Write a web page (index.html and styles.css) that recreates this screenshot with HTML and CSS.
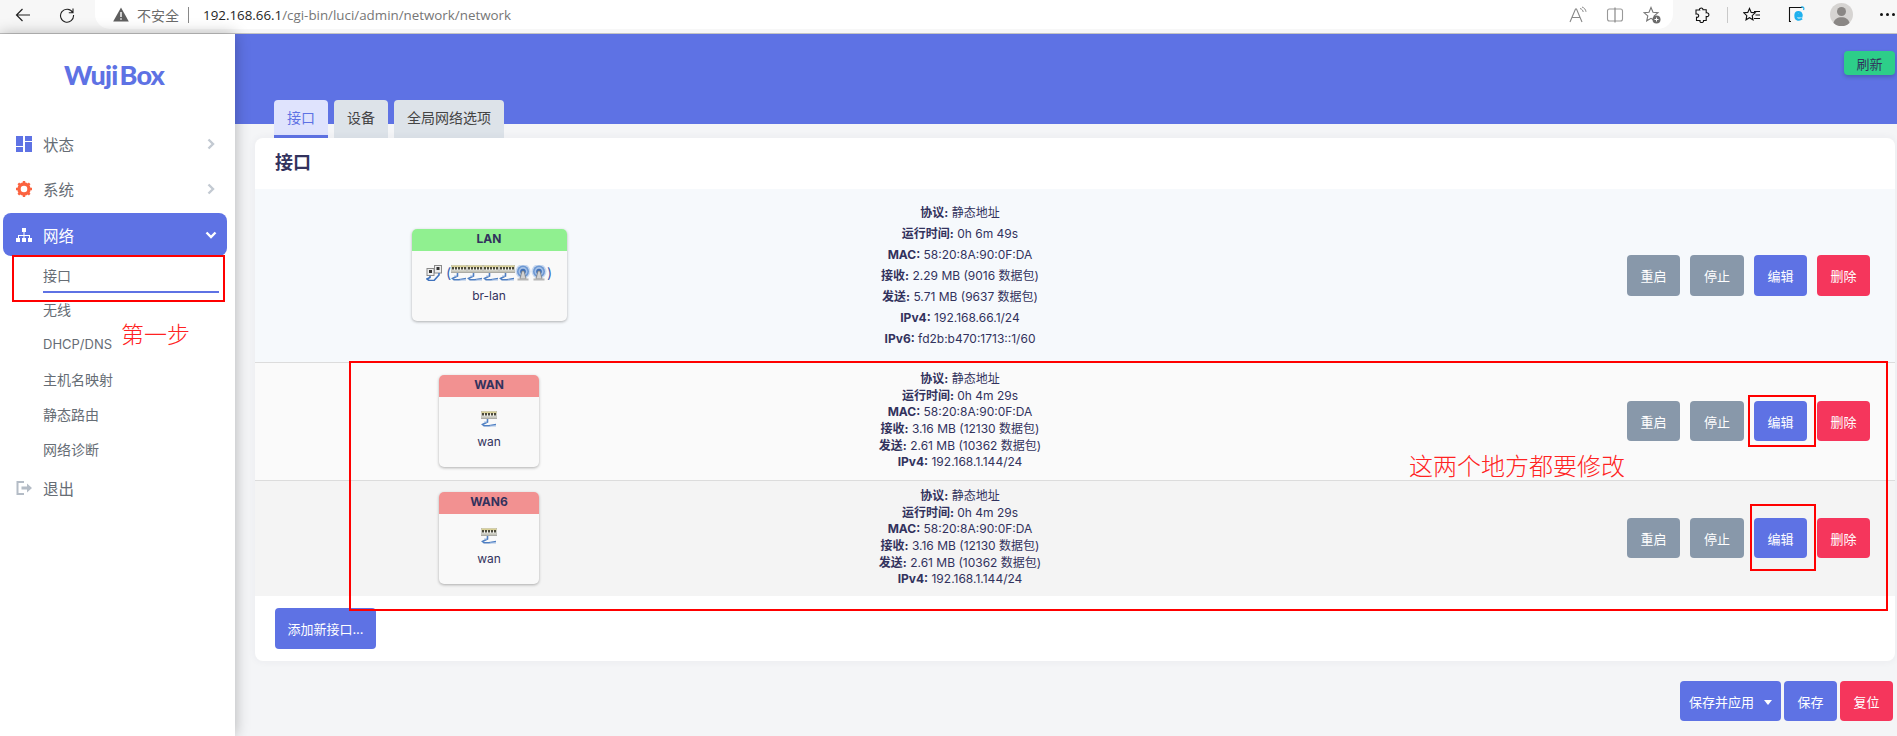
FILE: index.html
```html
<!DOCTYPE html>
<html lang="zh-CN">
<head>
<meta charset="utf-8">
<title>WujiBox - 接口</title>
<link rel="stylesheet" href="styles.css">
</head>
<body>
<svg class="defs" width="0" height="0" aria-hidden="true">
  <symbol id="port" viewBox="0 0 16 16">
    <rect x="0" y="0" width="16" height="7.500" fill="#f1f1ec" stroke="#9a9a92" stroke-width=".8"/>
    <rect x="0.500" y="0.500" width="15" height="2" fill="#d8cf95"/>
    <g fill="#4c4a3c"><rect x="1" y="2" width="2" height="2.500"/><rect x="4" y="2" width="2" height="2.500"/><rect x="7" y="2" width="2" height="2.500"/><rect x="10" y="2" width="2" height="2.500"/><rect x="13" y="2" width="2" height="2.500"/></g>
    <rect x="0.500" y="5.500" width="15" height="1.200" fill="#b3b3a6"/>
    <path d="M6.500 8v3L1.500 13.500l1.500 1.300h5L15 13.500" fill="none" stroke="#4f7fc2" stroke-width="1.600"/>
    <path d="M3 11h3M9 15h6" stroke="#a8c2e6" stroke-width="1.100"/>
  </symbol>
  <symbol id="bridge" viewBox="0 0 16 16">
    <rect x="8.500" y="0.500" width="7" height="7.500" fill="#eee" stroke="#8a8a8a"/>
    <rect x="1" y="3.500" width="7" height="7" fill="#eee" stroke="#8a8a8a"/>
    <rect x="3" y="5" width="3" height="3" fill="#333"/><rect x="10.500" y="2" width="3" height="3" fill="#333"/>
    <path d="M4 11v1.500l-3 1.500 2 1.500h5l5-5.500V8" fill="none" stroke="#3f72bd" stroke-width="1.600"/>
  </symbol>
  <symbol id="wifi" viewBox="0 0 16 16">
    <circle cx="8" cy="6.500" r="7.500" fill="#c9d9ef"/>
    <circle cx="8" cy="6.500" r="6" fill="#6d98d3"/>
    <circle cx="8" cy="6.500" r="4.400" fill="#a5c1e6"/>
    <circle cx="8" cy="6.500" r="2.800" fill="#3f70b8"/>
    <path d="M5 14l2-8h2l2 8z" fill="#d2d2d2" stroke="#777" stroke-width=".7"/>
    <rect x="2.500" y="13.500" width="11" height="2" fill="#b5b5b5"/>
  </symbol>
</svg>

<header class="browser">
  <button class="tool" aria-label="后退"><svg width="16" height="16" viewBox="0 0 16 16"><path d="M15 8H1.500M7.500 2L1.500 8l6 6" fill="none" stroke="#222" stroke-width="1.200"/></svg></button>
  <button class="tool tool-reload" aria-label="刷新"><svg width="16" height="16" viewBox="0 0 16 16"><path d="M13.700 5.500A6.500 6.500 0 1 0 14.500 8M14 1.500v4.200H9.800" fill="none" stroke="#222" stroke-width="1.100"/></svg></button>
  <div class="address">
    <svg class="warn" width="16" height="15" viewBox="0 0 16 15"><path d="M8 .5l7.800 14H.2z" fill="#5f5f5f"/><path d="M8 5v5M8 11.200v1.600" stroke="#fff" stroke-width="1.400"/></svg>
    <span class="insecure">不安全</span>
    <span class="sep"></span>
    <span class="url"><span class="host">192.168.66.1</span>/cgi-bin/luci/admin/network/network</span>
    <span class="addr-icons">
      <svg width="18" height="18" viewBox="0 0 18 18"><path d="M1 16L6.500 3h1L13 16M3 11.500h8.500" fill="none" stroke="#888" stroke-width="1.100"/><path d="M11 2.500c2 .5 3 2 3.200 3.500M13 1c2.300.8 3.700 2.500 4 4.800" fill="none" stroke="#888"/></svg>
      <svg width="18" height="18" viewBox="0 0 18 18"><rect x="1.500" y="3" width="15" height="12" rx="2" fill="none" stroke="#999" stroke-width="1.100"/><path d="M9 1.500v15" stroke="#888" stroke-width="1.200"/></svg>
      <svg width="18" height="18" viewBox="0 0 18 18"><path d="M8 1.500l2 4.700 5 .4-3.800 3.300 1 4.900L8 12.300l-4.300 2.500 1.100-4.900L1 6.600l5-.4z" fill="none" stroke="#777" stroke-width="1.100"/><circle cx="13.500" cy="13.500" r="4" fill="#6b6b6b"/><path d="M13.500 11.500v4M11.500 13.500h4" stroke="#fff"/></svg>
    </span>
  </div>
  <div class="browser-right">
    <svg width="16" height="16" viewBox="0 0 16 16"><path d="M6 1.500c1.500-1 3-.2 3 1.300h3.200v3c1.800-.3 3 1 2.600 2.500-.4 1.300-1.500 1.500-2.600 1.200v4H9.500c.3 1.500-1 2.300-2.300 2-1.200-.3-1.500-1.200-1.200-2H2.500v-3.200c1.200.4 2.300-.5 2.200-1.700-.1-1.300-1.200-2-2.700-1.500V3H5.600c-.3-.5 0-1.200.4-1.500z" fill="none" stroke="#111" stroke-width="1.100"/></svg>
    <span class="bar-sep"></span>
    <svg class="favs" width="18" height="16" viewBox="0 0 18 16"><path d="M6.500 1.500l1.700 3.900 4 .4-3 2.800.8 4.200-3.500-2.100L3 12.800l.8-4.200-3-2.800 4-.4z" fill="none" stroke="#111" stroke-width="1.100"/><path d="M11 4.500h6M12.500 8h4.500M11 11.500h6" stroke="#111"/></svg>
    <svg class="ie" width="17" height="17" viewBox="0 0 17 17"><path d="M3 15.500H1.500V1.500h13" fill="none" stroke="#111" stroke-width="1.100"/><path d="M14.500 10.500H7.500c0 3.500 4 4 6.500 2M7.500 8.500c.3-3 5-3.500 6 0z" fill="none" stroke="#1fb1ee" stroke-width="2.200"/><path d="M13 1c2.300-.6 3.500.5 2.500 3" fill="none" stroke="#1fb1ee" stroke-width="1.200"/></svg>
    <svg class="avatar" width="23" height="23" viewBox="0 0 23 23"><circle cx="11.500" cy="11.500" r="11.500" fill="#d6d4d2"/><circle cx="11.500" cy="8.500" r="4.500" fill="#8a8785"/><path d="M3.500 20c.8-4 4-5.800 8-5.800s7.200 1.800 8 5.800a11.500 11.500 0 0 1-16 0z" fill="#8a8785"/></svg>
    <span class="dots"><i></i><i></i><i></i></span>
  </div>
</header>

<div class="app">
  <aside class="sidebar">
    <div class="logo">Wuji<span class="logo-b">Box</span></div>
    <nav class="nav">
      <a class="nav-item">
        <svg class="nav-icon" width="16" height="16" viewBox="0 0 16 16"><g fill="#5e72e4"><rect width="7" height="10"/><rect y="11" width="7" height="5"/><rect x="9" width="7" height="5"/><rect x="9" y="6" width="7" height="10"/></g></svg>
        <span class="nav-text">状态</span>
        <svg class="chev" width="8" height="12" viewBox="0 0 8 12"><path d="M1.500 1.500L6 6l-4.500 4.500" fill="none" stroke="#c3cad2" stroke-width="2.400"/></svg>
      </a>
      <a class="nav-item">
        <svg class="nav-icon" width="16" height="16" viewBox="0 0 16 16"><circle cx="8" cy="8" r="5" fill="none" stroke="#fb6340" stroke-width="3.400"/><path d="M8 0v3M8 13v3M0 8h3M13 8h3M2.300 2.300l2.100 2.100M11.600 11.600l2.100 2.100M2.300 13.700l2.100-2.100M11.600 4.400l2.100-2.100" stroke="#fb6340" stroke-width="2.400"/></svg>
        <span class="nav-text">系统</span>
        <svg class="chev" width="8" height="12" viewBox="0 0 8 12"><path d="M1.500 1.500L6 6l-4.500 4.500" fill="none" stroke="#c3cad2" stroke-width="2.400"/></svg>
      </a>
      <a class="nav-item nav-active">
        <svg class="nav-icon" width="16" height="16" viewBox="0 0 16 16"><g fill="#fff"><rect x="6" y="1" width="4" height="4"/><rect x="0" y="11" width="4" height="4"/><rect x="6" y="11" width="4" height="4"/><rect x="12" y="11" width="4" height="4"/><path d="M7.500 5h1v3H14v3h-1V9H8.500v2h-1V9H3v2H2V8h5.500z"/></g></svg>
        <span class="nav-text">网络</span>
        <svg class="chev" width="12" height="8" viewBox="0 0 12 8"><path d="M1.500 1.500L6 6l4.500-4.500" fill="none" stroke="#fff" stroke-width="2.400"/></svg>
      </a>
      <ul class="sub">
        <li class="sub-item sub-active"><span>接口</span></li>
        <li class="sub-item"><span>无线</span></li>
        <li class="sub-item sub-latin"><span>DHCP/DNS</span></li>
        <li class="sub-item"><span>主机名映射</span></li>
        <li class="sub-item"><span>静态路由</span></li>
        <li class="sub-item"><span>网络诊断</span></li>
      </ul>
      <a class="nav-item nav-logout">
        <svg class="nav-icon" width="16" height="16" viewBox="0 0 16 16"><path d="M8 2H1.500v12H8" fill="none" stroke="#b4bcc6" stroke-width="2"/><path d="M5.500 6.500H11V3.500L16 8l-5 4.500v-3H5.500z" fill="#b4bcc6"/></svg>
        <span class="nav-text">退出</span>
      </a>
    </nav>
  </aside>

  <main class="content">
    <section class="hero">
      <button class="btn-refresh">刷新</button>
      <div class="tabs">
        <a class="tab tab-active">接口</a>
        <a class="tab">设备</a>
        <a class="tab">全局网络选项</a>
      </div>
    </section>

    <section class="card">
      <h2 class="card-title">接口</h2>

      <div class="row row-lan">
        <div class="badge-cell">
          <div class="badge badge-lan">
            <div class="badge-head head-green">LAN</div>
            <div class="badge-body">
              <div class="ports">
                <svg class="pi pi-b"><use href="#bridge"/></svg>
                <span class="paren">(</span>
                <svg class="pi"><use href="#port"/></svg><svg class="pi"><use href="#port"/></svg><svg class="pi"><use href="#port"/></svg><svg class="pi"><use href="#port"/></svg><svg class="pi"><use href="#wifi"/></svg><svg class="pi"><use href="#wifi"/></svg>
                <span class="paren">)</span>
              </div>
              <div class="dev">br-lan</div>
            </div>
          </div>
        </div>
        <div class="status status-wide">
          <p><b>协议:</b> 静态地址</p>
          <p><b>运行时间:</b> 0h 6m 49s</p>
          <p><b>MAC:</b> 58:20:8A:90:0F:DA</p>
          <p><b>接收:</b> 2.29 MB (9016 数据包)</p>
          <p><b>发送:</b> 5.71 MB (9637 数据包)</p>
          <p><b>IPv4:</b> 192.168.66.1/24</p>
          <p><b>IPv6:</b> fd2b:b470:1713::1/60</p>
        </div>
        <div class="actions">
          <button class="btn btn-gray">重启</button>
          <button class="btn btn-gray btn-w">停止</button>
          <button class="btn btn-blue">编辑</button>
          <button class="btn btn-red">删除</button>
        </div>
      </div>

      <div class="row row-wan">
        <div class="badge-cell">
          <div class="badge">
            <div class="badge-head head-red">WAN</div>
            <div class="badge-body">
              <div class="ports"><svg class="pi"><use href="#port"/></svg></div>
              <div class="dev">wan</div>
            </div>
          </div>
        </div>
        <div class="status">
          <p><b>协议:</b> 静态地址</p>
          <p><b>运行时间:</b> 0h 4m 29s</p>
          <p><b>MAC:</b> 58:20:8A:90:0F:DA</p>
          <p><b>接收:</b> 3.16 MB (12130 数据包)</p>
          <p><b>发送:</b> 2.61 MB (10362 数据包)</p>
          <p><b>IPv4:</b> 192.168.1.144/24</p>
        </div>
        <div class="actions actions-short">
          <button class="btn btn-gray">重启</button>
          <button class="btn btn-gray btn-w">停止</button>
          <button class="btn btn-blue">编辑</button>
          <button class="btn btn-red">删除</button>
        </div>
      </div>

      <div class="row row-wan6">
        <div class="badge-cell">
          <div class="badge">
            <div class="badge-head head-red">WAN6</div>
            <div class="badge-body">
              <div class="ports"><svg class="pi"><use href="#port"/></svg></div>
              <div class="dev">wan</div>
            </div>
          </div>
        </div>
        <div class="status">
          <p><b>协议:</b> 静态地址</p>
          <p><b>运行时间:</b> 0h 4m 29s</p>
          <p><b>MAC:</b> 58:20:8A:90:0F:DA</p>
          <p><b>接收:</b> 3.16 MB (12130 数据包)</p>
          <p><b>发送:</b> 2.61 MB (10362 数据包)</p>
          <p><b>IPv4:</b> 192.168.1.144/24</p>
        </div>
        <div class="actions actions-short">
          <button class="btn btn-gray">重启</button>
          <button class="btn btn-gray btn-w">停止</button>
          <button class="btn btn-blue">编辑</button>
          <button class="btn btn-red">删除</button>
        </div>
      </div>

      <div class="card-foot">
        <button class="btn btn-blue btn-add">添加新接口...</button>
      </div>
    </section>

    <div class="page-actions">
      <button class="btn btn-blue btn-apply">保存并应用<span class="caret"></span></button>
      <button class="btn btn-blue btn-page">保存</button>
      <button class="btn btn-red btn-page">复位</button>
    </div>
  </main>
</div>

<div class="mark mark-nav"></div>
<div class="mark mark-wan"></div>
<div class="mark mark-edit1"></div>
<div class="mark mark-edit2"></div>
<div class="note note-step">第一步</div>
<div class="note note-both">这两个地方都要修改</div>
</body>
</html>
```
FILE: styles.css
```css
* { box-sizing: border-box; }
html, body { margin: 0; height: 100%; overflow: hidden; }
body {
  position: relative;
  display: flex;
  flex-direction: column;
  font-family: Inter, "Noto Sans CJK SC", sans-serif;
  font-size: 13px;
  color: #32325d;
  background: #f4f5f7;
}
p, h2, ul { margin: 0; padding: 0; }
button { font: inherit; border: 0; padding: 0; }
.defs { position: absolute; left: 0; top: 0; }

/* browser chrome */
.browser {
  flex: none;
  height: 34px;
  display: flex;
  align-items: flex-start;
  background: #f7f7f7;
  border-bottom: 1px solid #c4c4c4;
}
.tool {
  flex: none;
  width: 16px;
  height: 16px;
  margin: 7px 0 0 15px;
  background: none;
  line-height: 0;
}
.tool-reload { margin-left: 28px; }
.address {
  flex: none;
  width: 1578px;
  height: 29px;
  margin-left: 20px;
  display: flex;
  align-items: center;
  background: #fff;
  border-radius: 0 0 15px 15px;
  padding-left: 18px;
}
.warn { flex: none; }
.insecure { margin-left: 8px; font-size: 14px; color: #6b6b6b; }
.sep { width: 1px; height: 16px; margin: 0 14px 0 9px; background: #888; }
.url { font-family: "Open Sans", sans-serif; font-size: 13.350px; color: #767676; white-space: nowrap; }
.host { color: #1f1f1f; }
.addr-icons { margin-left: auto; margin-right: 12px; display: flex; gap: 19px; }
.browser-right { flex: 1; display: flex; align-items: center; height: 29px; padding-left: 21px; }
.bar-sep { width: 1px; height: 16px; margin-left: 17px; background: #c9c9c9; }
.favs { margin-left: 15px; }
.ie { margin-left: 27px; }
.avatar { margin-left: 25px; }
.dots { margin-left: 27px; display: flex; gap: 3px; }
.dots i { width: 3px; height: 3px; border-radius: 50%; background: #111; }

/* application */
.app { flex: 1; display: flex; min-height: 0; }
.sidebar {
  flex: none;
  position: relative;
  z-index: 2;
  width: 235px;
  background: #fff;
  box-shadow: 0 0 14px rgba(0, 0, 0, .28);
}
.logo {
  height: 87px;
  padding: 25px 7px 0 0;
  text-align: center;
  font-family: Lato, sans-serif;
  font-weight: 900;
  font-size: 27px;
  line-height: 32px;
  letter-spacing: -.8px;
  color: #5e72e4;
}
.logo-b { margin-left: 2px; }
.nav-item {
  height: 45px;
  margin: 0 8px 0 3px;
  display: flex;
  align-items: center;
  padding-left: 13px;
  color: #666d75;
  font-size: 15.500px;
  border-radius: 8px;
}
.nav-icon { flex: none; }
.nav-text { margin-left: 11px; }
.chev { margin-left: auto; margin-right: 12px; }
.nav-active { height: 43px; margin-top: 2px; background: #5e72e4; color: #fff; }
.nav-active .chev { margin-right: 10px; }
.sub { list-style: none; padding-top: 2px; }
.sub-item { height: 35px; margin: 0 16px 0 43px; display: flex; align-items: center; font-size: 14px; color: #666d75; }
.sub-active { border-bottom: 2px solid #5e72e4; margin-bottom: -2px; }
.sub-latin { font-size: 13px; }
.nav-logout { height: 44px; }

.content { flex: 1; min-width: 0; display: flex; flex-direction: column; }
.hero {
  flex: none;
  height: 90px;
  background: #5e72e4;
  padding: 17px 2px 0 39px;
  display: flex;
  flex-direction: column;
}
.btn-refresh {
  flex: none;
  align-self: flex-end;
  width: 51px;
  height: 24px;
  background: #2dce89;
  color: #32325d;
  border-radius: 4px;
  box-shadow: 0 2px 4px rgba(0, 0, 0, .2);
}
.tabs { flex: none; display: flex; gap: 6px; margin-top: 25px; }
.tab {
  height: 38px;
  padding: 0 13px;
  line-height: 35px;
  font-size: 14px;
  color: #444;
  background: #dde3e9;
  border-radius: 4px 4px 0 0;
}
.tab-active { color: #5e72e4; background: #dfe3fd; border-bottom: 3px solid #5e72e4; }

.card {
  flex: none;
  margin: 14px 2px 0 20px;
  height: 523px;
  background: #fff;
  border-radius: 8px;
  overflow: hidden;
  box-shadow: 0 0 8px rgba(50, 50, 93, .06);
}
.card-title { height: 51px; padding-left: 20px; font-size: 18px; line-height: 50px; font-weight: 700; }
.row {
  display: grid;
  grid-template-columns: 468px 474px 1fr;
  align-items: center;
  border-top: 1px solid #dcdcdc;
  padding-bottom: 1px;
}
.row-lan { height: 173px; background: #f6f9fc; border-top: 0; }
.row-wan { height: 118px; background: #fafafa; }
.row-wan6 { height: 116px; background: #f4f4f4; }
.badge-cell { display: flex; justify-content: center; }
.badge {
  width: 100px;
  height: 92px;
  background: #f9f9f9;
  border-radius: 5px;
  overflow: hidden;
  box-shadow: 0 1px 3px rgba(0, 0, 0, .3);
  font-size: 12px;
}
.badge-lan { width: 155px; }
.badge-head { height: 22px; text-align: center; font-weight: 700; line-height: 20px; }
.head-green { background: #90f090; }
.head-red { background: #f29191; }
.badge-body { text-align: center; padding-top: 13px; }
.ports { height: 17px; display: flex; justify-content: center; align-items: center; }
.pi { width: 16px; height: 16px; flex: none; }
.pi-b { margin-right: 4px; }
.paren { font-size: 14px; line-height: 16px; color: #3a5fb0; }
.dev { margin-top: 7px; line-height: 16px; }
.status { text-align: center; font-size: 12px; line-height: 16.700px; }
.status-wide { line-height: 21px; }
.status b { font-weight: 700; }
.actions { display: flex; justify-content: flex-end; gap: 10px; padding-right: 25px; }
.btn { display: block; height: 41px; width: 53px; color: #fff; border-radius: 4px; font-size: 13px; }
.btn-w { width: 54px; }
.actions-short .btn { height: 40px; }
.btn-gray { background: #8898aa; }
.btn-blue { background: #5e72e4; }
.btn-red { background: #f5365c; }
.card-foot { padding: 12px 20px; }
.btn-add { width: 101px; height: 41px; }

.page-actions { display: flex; justify-content: flex-end; gap: 3px; margin: 20px 2px 0 0; padding-right: 2px; }
.btn-apply { width: 101px; height: 40px; }
.btn-page { height: 40px; }
.caret {
  display: inline-block;
  margin-left: 10px;
  vertical-align: 2px;
  border: 4px solid transparent;
  border-top: 5px solid #fff;
  border-bottom: 0;
}

/* screenshot annotations drawn over the page */
.mark { position: absolute; z-index: 5; border: 2px solid #f00; }
.mark-nav { left: 12px; top: 255px; width: 213px; height: 47px; }
.mark-wan { left: 349px; top: 361px; width: 1539px; height: 250px; }
.mark-edit1 { left: 1748px; top: 395px; width: 68px; height: 52px; }
.mark-edit2 { left: 1750px; top: 504px; width: 66px; height: 67px; }
.note {
  position: absolute;
  z-index: 5;
  color: #f22;
  font-family: "Noto Sans CJK SC", sans-serif;
  font-weight: 300;
  white-space: nowrap;
}
.note-step { left: 121px; top: 317px; font-size: 23px; line-height: 32px; }
.note-both { left: 1409px; top: 449px; font-size: 24px; line-height: 32px; }
```
